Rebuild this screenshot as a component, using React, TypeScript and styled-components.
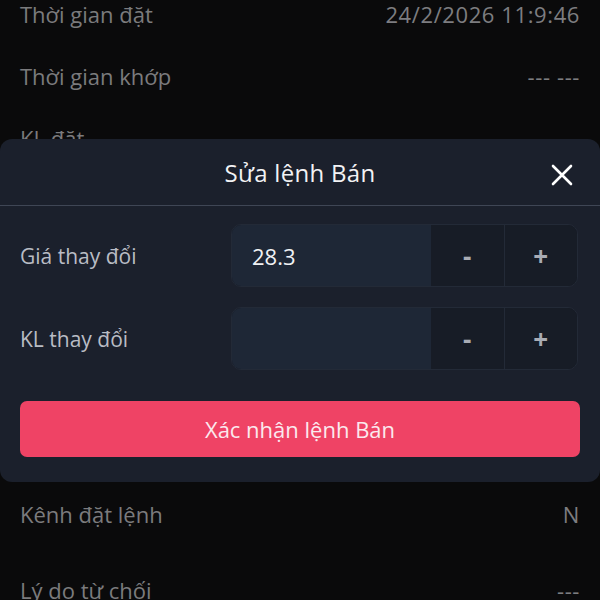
import React, { ReactElement } from "react";
import styled, { createGlobalStyle } from "styled-components";

const GlobalStyle = createGlobalStyle`
  html, body {
    margin: 0;
    padding: 0;
    background: #0a0a0b;
    font-family: "Open Sans", "Noto Sans", sans-serif;
  }
`;

interface DetailRow {
  label: string;
  value: string;
  // extra space above the row (rows under the sheet are not drawn)
  offset?: number;
}

const detailRows: DetailRow[] = [
  { label: "Thời gian đặt", value: "24/2/2026 11:9:46" },
  { label: "Thời gian khớp", value: "--- ---" },
  { label: "KL đặt", value: "" },
  { label: "Kênh đặt lệnh", value: "N", offset: 314 },
  { label: "Lý do từ chối", value: "---", offset: 14 },
];

export default function App(): ReactElement {
  return (
    <>
      <GlobalStyle />
      <StyledScreen>
        <StyledList>
          {detailRows.map((row) => (
            <StyledRow key={row.label} $offset={row.offset ?? 0}>
              <StyledLabel>{row.label}</StyledLabel>
              <StyledValue>{row.value}</StyledValue>
            </StyledRow>
          ))}
        </StyledList>

        <StyledSheet>
          <StyledHeader>
            <StyledTitle>Sửa lệnh Bán</StyledTitle>
            <StyledClose aria-label="Đóng">
              <svg width="22" height="22" viewBox="0 0 22 22">
                <path
                  d="M2 2 L20 20 M20 2 L2 20"
                  stroke="#ffffff"
                  strokeWidth="2.6"
                  strokeLinecap="round"
                />
              </svg>
            </StyledClose>
          </StyledHeader>

          <StyledBody>
            <StyledField>
              <StyledFieldLabel>Giá thay đổi</StyledFieldLabel>
              <StyledStepper>
                <StyledInput defaultValue="28.3" />
                <StyledStep>-</StyledStep>
                <StyledStep $divider>+</StyledStep>
              </StyledStepper>
            </StyledField>
            <StyledField>
              <StyledFieldLabel>KL thay đổi</StyledFieldLabel>
              <StyledStepper>
                <StyledInput defaultValue="" />
                <StyledStep>-</StyledStep>
                <StyledStep $divider>+</StyledStep>
              </StyledStepper>
            </StyledField>

            <StyledConfirm>Xác nhận lệnh Bán</StyledConfirm>
          </StyledBody>
        </StyledSheet>
      </StyledScreen>
    </>
  );
}

const StyledScreen = styled.div`
  position: relative;
  width: 600px;
  height: 600px;
  overflow: hidden;
  background: #0a0a0b;
`;

const StyledList = styled.div`
  display: flex;
  flex-direction: column;
  margin-top: -17px;
  padding: 0 20px;
`;

const StyledRow = styled.div<{ $offset: number }>`
  display: flex;
  justify-content: space-between;
  align-items: center;
  height: 62px;
  margin-top: ${({ $offset }) => $offset}px;
`;

const StyledLabel = styled.span`
  font-size: 22px;
  color: #7b7b7d;
`;

const StyledValue = styled.span`
  font-size: 22px;
  letter-spacing: 0.6px;
  color: #7d7d80;
`;

const StyledSheet = styled.section`
  position: absolute;
  left: 0;
  right: 0;
  top: 139px;
  height: 343px;
  background: #1b202c;
  border-radius: 12px;
  display: flex;
  flex-direction: column;
`;

const StyledHeader = styled.header`
  position: relative;
  display: flex;
  justify-content: center;
  align-items: center;
  height: 66px;
  border-bottom: 1.5px solid #3f4655;
`;

const StyledTitle = styled.h2`
  margin: 0;
  font-size: 24px;
  font-weight: 500;
  letter-spacing: 0.3px;
  color: #f2f2f4;
`;

const StyledClose = styled.button`
  position: absolute;
  right: 27px;
  top: 25px;
  width: 22px;
  height: 22px;
  padding: 0;
  border: none;
  background: none;
  display: flex;
`;

const StyledBody = styled.div`
  display: flex;
  flex-direction: column;
  gap: 20px;
  padding: 18px 20px 0 20px;
`;

const StyledField = styled.div`
  display: flex;
  align-items: center;
  justify-content: space-between;
`;

const StyledFieldLabel = styled.span`
  font-size: 21px;
  color: #b9bcc4;
`;

const StyledStepper = styled.div`
  display: flex;
  width: 345px;
  height: 61px;
  margin-right: 2px;
  border: 1px solid #232a37;
  border-radius: 10px;
  overflow: hidden;
  background: #171c26;
`;

const StyledInput = styled.input`
  box-sizing: border-box;
  width: 199px;
  border: none;
  outline: none;
  padding: 0 0 0 20px;
  background: #1e2736;
  color: #f0f1f4;
  font-family: "Open Sans", "Noto Sans", sans-serif;
  font-size: 22px;
`;

const StyledStep = styled.button<{ $divider?: boolean }>`
  flex: 1;
  border: none;
  border-left: ${({ $divider }) => ($divider ? "1px solid #232a37" : "none")};
  background: #171c26;
  color: #a9acb4;
  font-family: "Open Sans", "Noto Sans", sans-serif;
  font-size: 26px;
  font-weight: 700;
`;

const StyledConfirm = styled.button`
  margin-top: 11px;
  height: 56px;
  border: none;
  border-radius: 7px;
  background: #ef4365;
  color: #fbe9ee;
  font-family: "Open Sans", "Noto Sans", sans-serif;
  font-size: 22px;
  font-weight: 500;
`;
